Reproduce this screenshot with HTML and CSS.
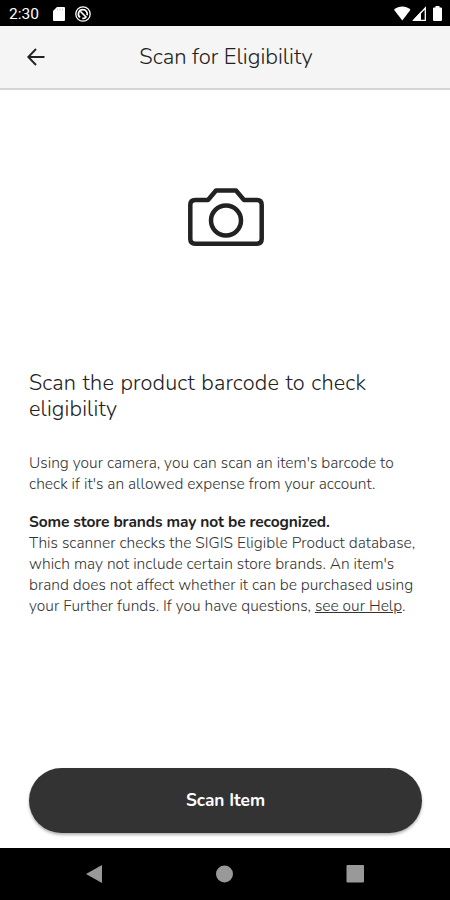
FILE: index.html
```
<!DOCTYPE html>
<html lang="en">
<head>
  <meta charset="UTF-8">
  <meta name="viewport" content="width=device-width, initial-scale=1.0">
  <title>Scan for Eligibility</title>
  <link rel="stylesheet" href="styles.css">
</head>
<body>
  <div class="status-bar">
    <span class="time">2:30</span>
    <svg class="sd-icon" width="12" height="15" viewBox="0 0 12 15">
      <path d="M4 0h7a1 1 0 0 1 1 1v12a1 1 0 0 1-1 1H1a1 1 0 0 1-1-1V4z" fill="#fff"/>
      <path d="M4.5 1.500v2M7 1.500v2M9.500 1.500v2" stroke="#ccc"/>
    </svg>
    <svg class="sync-icon" width="16" height="16" viewBox="0 0 16 16" fill="none" stroke="#fff">
      <circle cx="8" cy="8" r="7.200" stroke-width="1.300"/>
      <path d="M5.100 11.400A4.300 4.300 0 0 1 8 3.700a4.300 4.300 0 0 1 4.100 5.600M7.300 12.300a4.300 4.300 0 0 0 3.500-1M5.500 5.500l6 6" stroke-width="1.700"/>
    </svg>
    <svg class="signal-icons" width="49" height="16" viewBox="0 0 49 16">
      <path d="M0 3.700C5-.6 11.500-.6 16.500 3.700L8.300 14.500z" fill="#fff"/>
      <path d="M31.300 2V14.300H19.800z" fill="none" stroke="#fff" stroke-width="1.300"/>
      <path d="M27 5.500V14.500H18.500z" fill="#fff"/>
      <path d="M41.500 1.500V0h4v1.500H47a1 1 0 0 1 1 1V14a1 1 0 0 1-1 1h-7a1 1 0 0 1-1-1V2.500a1 1 0 0 1 1-1z" fill="#fff"/>
    </svg>
  </div>

  <header class="app-bar">
    <svg class="back-icon" width="18" height="18" viewBox="0 0 18 18" fill="none" stroke="#222" stroke-width="1.900">
      <path d="M17.500 9H1.500M9 1L1.300 9L9 17"/>
    </svg>
    <h1>Scan for Eligibility</h1>
  </header>

  <main>
    <svg class="camera-icon" width="76" height="58" viewBox="0 0 76 58" fill="none" stroke="#222" stroke-width="4.500" stroke-linejoin="round">
      <path d="M7.300 12H20L28 2.500H48L56 12H69Q73.700 12 73.700 17V51Q73.700 55.700 69 55.700H7.300Q2.300 55.700 2.300 51V17Q2.300 12 7.300 12z"/>
      <circle cx="38" cy="32.500" r="15"/>
    </svg>

    <h2>Scan the product barcode to check<br>eligibility</h2>
    <p class="intro">Using your camera, you can scan an item's barcode to<br>check if it's an allowed expense from your account.</p>
    <p class="note">
      <strong>Some store brands may not be recognized.</strong><br>
      This scanner checks the SIGIS Eligible Product database,<br>
      which may not include certain store brands. An item's<br>
      brand does not affect whether it can be purchased using<br>
      your Further funds. If you have questions, <a href="#">see our Help</a>.
    </p>

    <button class="scan-button">Scan Item</button>
  </main>

  <nav class="nav-bar">
    <svg width="16" height="18" viewBox="0 0 16 18"><path d="M16 0v18L0 9z" fill="#999"/></svg>
    <svg width="18" height="18" viewBox="0 0 18 18"><circle cx="9.500" cy="9" r="8.500" fill="#999"/></svg>
    <svg width="18" height="18" viewBox="0 0 18 18"><rect x="0.500" width="17.500" height="17.500" rx="1" fill="#999"/></svg>
  </nav>
</body>
</html>
```
FILE: styles.css
```
body {
  display: flex;
  flex-direction: column;
  height: 900px;
  margin: 0;
  background-color: #fff;
  color: #222;
  font-family: Nunito, Lato, sans-serif;
}
.status-bar {
  display: flex;
  align-items: center;
  box-sizing: border-box;
  height: 26px;
  padding: 2px 7px 0 9px;
  background-color: #000;
  color: #fff;
}
.time {
  width: 44px;
  font-family: Roboto, sans-serif;
  font-size: 15.5px;
}
.sync-icon {
  margin-left: 10px;
}
.signal-icons {
  margin-left: auto;
}
.app-bar {
  display: grid;
  grid-template-columns: 18px 1fr 18px;
  align-items: center;
  box-sizing: border-box;
  height: 64px;
  padding: 0 25px 0 27px;
  background-color: #f5f5f5;
  border-bottom: 2px solid #d4d4d4;
}
h1 {
  margin: 0;
  font-size: 22px;
  font-weight: 300;
  text-align: center;
}
main {
  display: flex;
  flex: 1;
  flex-direction: column;
  padding: 98px 28px 15px 29px;
}
.camera-icon {
  align-self: center;
}
h2 {
  margin: 124px 0 0;
  font-size: 21.7px;
  font-weight: 350;
  letter-spacing: 0.15px;
  word-spacing: 0.9px;
  line-height: 26px;
}
p {
  margin: 0;
  color: #333;
  font-size: 15.5px;
  font-weight: 300;
  letter-spacing: 0.02px;
  line-height: 21px;
  white-space: nowrap;
}
.intro {
  margin-top: 30px;
}
.note {
  margin-top: 17px;
}
strong {
  color: #222;
  font-weight: 700;
  letter-spacing: -0.12px;
}
a {
  color: inherit;
}
.scan-button {
  height: 65px;
  margin-top: auto;
  border: none;
  border-radius: 33px;
  background-color: #333;
  box-shadow: 0 2px 3px rgba(0, 0, 0, 0.3);
  color: #fff;
  font-family: inherit;
  font-size: 17.3px;
  font-weight: 700;
  cursor: pointer;
}
.nav-bar {
  display: flex;
  align-items: center;
  justify-content: space-between;
  height: 52px;
  padding: 0 86px;
  background-color: #000;
}
```
